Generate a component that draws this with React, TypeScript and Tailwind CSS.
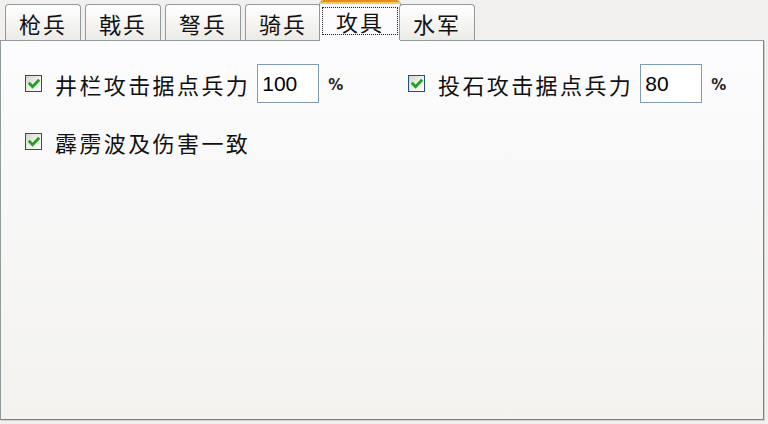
import React from "react";

const TABS = ["枪兵", "戟兵", "弩兵", "骑兵", "攻具", "水军"];
const ACTIVE = 4;

const CJK = { fontFamily: '"Noto Sans CJK SC", "Noto Sans", sans-serif' };

function XpCheck() {
  return (
    <span className="box-border inline-flex h-[17px] min-h-[17px] w-[17px] min-w-[17px] shrink-0 items-center justify-center border-[1.5px] border-[#1c5180] bg-gradient-to-br from-[#d4d4ce] via-[#efefea] to-white">
      <svg width="12" height="12" viewBox="0 0 12 12">
        <path d="M1.8 5.8 L4.6 8.8 L10.2 2.8" fill="none" stroke="#21a121" strokeWidth="2.8" strokeLinecap="square" />
      </svg>
    </span>
  );
}

function Field({ label, value, width }: { label: string; value: string; width: string }) {
  return (
    <div className={`flex h-[39px] items-center ${width}`}>
      <XpCheck />
      <span className="ml-[13px] text-[22px] leading-none tracking-[2.4px] text-[#111]" style={CJK}>
        {label}
      </span>
      <div className="ml-[7px] flex h-[39px] w-[62px] items-center border border-[#7f9db9] bg-white pl-[4px] font-['Liberation_Sans',sans-serif] text-[21px] text-black">
        {value}
      </div>
      <span className="ml-[9px] mt-[4px] font-['DejaVu_Sans',sans-serif] text-[15px] font-bold leading-none text-[#222]">%</span>
    </div>
  );
}

export default function App() {
  return (
    <div className="h-[424px] w-[768px] overflow-hidden bg-[#f1f0ee]">
      {/* tab strip */}
      <div className="relative z-10 flex h-[41px] items-end pl-[5px]">
        {TABS.map((t, i) =>
          i === ACTIVE ? (
            <div
              key={t}
              className="-mx-[2px] flex h-[41px] w-[82px] flex-col overflow-hidden rounded-t-[5px] border-x border-[#919b9c] bg-[#fcfcfe]"
            >
              <div className="h-[2px] bg-[#e68b2c]" />
              <div className="h-[2px] bg-[#ffc73c]" />
              <div className="mx-[2px] mt-[3px] flex h-[28px] items-center justify-center border border-dotted border-[#222]">
                <span className="text-[22px] leading-none tracking-[2px] text-[#111]" style={CJK}>
                  {t}
                </span>
              </div>
            </div>
          ) : (
            <div
              key={t}
              className={`mb-[1px] flex h-[36px] w-[76px] items-center justify-center rounded-t-[4px] border border-b-0 border-[#919b9c] bg-gradient-to-b from-white to-[#ecebe6] ${
                i === 0 || i === ACTIVE + 1 ? "" : "ml-[4px]"
              }`}
            >
              <span className="text-[22px] leading-none tracking-[2px] text-[#111]" style={CJK}>
                {t}
              </span>
            </div>
          )
        )}
      </div>

      {/* panel */}
      <div className="-mt-[1px] h-[380px] w-[764px] border border-[#919b9c] border-r-[#7a8283] border-b-[#7a8283] bg-gradient-to-b from-[#fcfcfe] to-[#f3f2ef] pl-[24px] pt-[23px] shadow-[1px_1px_0_#d0cfc9]">
        <div className="flex">
          <Field label="井栏攻击据点兵力" value="100" width="w-[383px]" />
          <Field label="投石攻击据点兵力" value="80" width="" />
        </div>
        <div className="mt-[19px] flex h-[39px] items-center">
          <XpCheck />
          <span className="ml-[13px] text-[22px] leading-none tracking-[2.4px] text-[#111]" style={CJK}>
            霹雳波及伤害一致
          </span>
        </div>
      </div>
    </div>
  );
}
